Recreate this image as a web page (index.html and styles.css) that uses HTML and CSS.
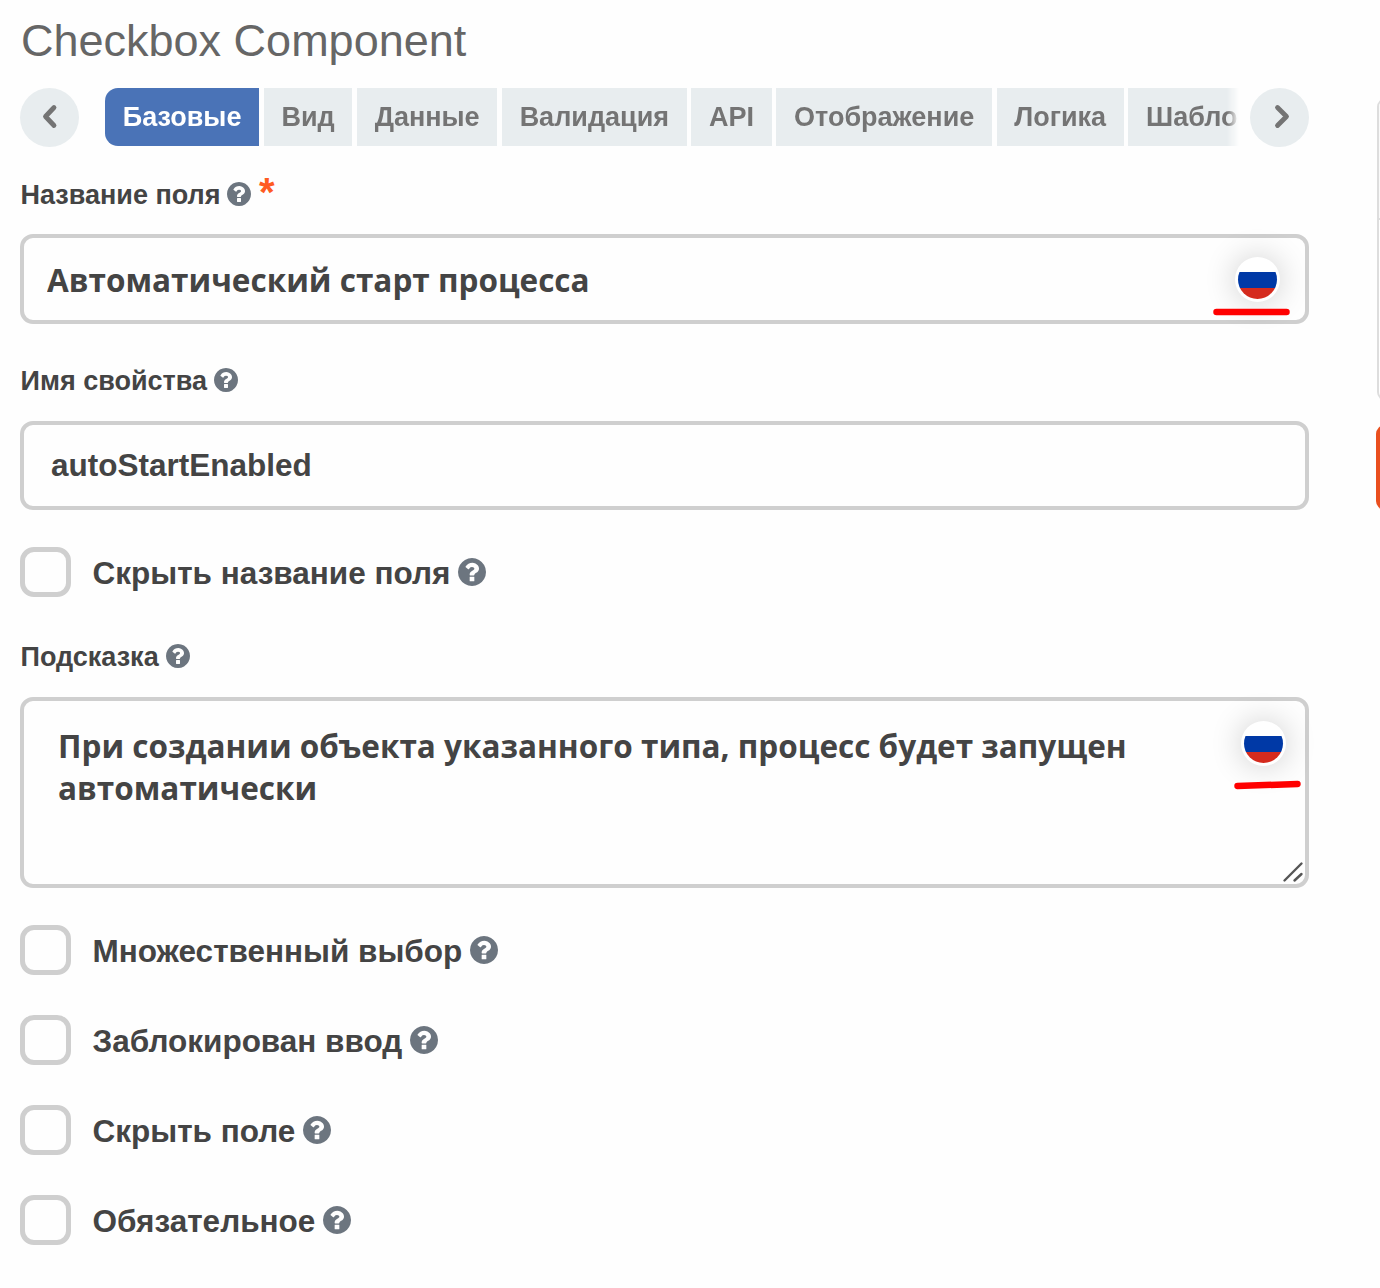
FILE: index.html
```html
<!DOCTYPE html>
<html lang="ru">
<head>
<meta charset="utf-8">
<title>Checkbox Component</title>
<link rel="stylesheet" href="styles.css">
</head>
<body>
<svg class="sprite" aria-hidden="true">
  <symbol id="help" viewBox="128 128 1536 1536"><path d="M1024 1376v-192q0-14-9-23t-23-9h-192q-14 0-23 9t-9 23v192q0 14 9 23t23 9h192q14 0 23-9t9-23zm256-672q0-88-55.5-163t-138.5-116-170-41q-243 0-371 213-15 24 8 42l132 100q7 6 19 6 16 0 25-12 53-68 86-92 34-24 86-24 48 0 85.5 26t37.5 59q0 38-20 61t-68 45q-63 28-115.5 86.5t-52.5 125.5v36q0 14 9 23t23 9h192q14 0 23-9t9-23q0-19 21.5-49.5t54.5-49.5q32-18 49-28.5t46-35 44.5-48 28-60.5 12.5-81zm384 192q0 209-103 385.5t-279.5 279.5-385.5 103-385.5-103-279.5-279.5-103-385.5 103-385.5 279.5-279.5 385.5-103 385.5 103 279.5 279.5 103 385.5z"/></symbol>
</svg>
<div class="page">
  <main class="editor">
    <h1 class="title">Checkbox Component</h1>
    <nav class="tabbar">
      <button class="arrow"><svg width="59" height="59"><path d="M34 19.500 25.500 28.500l8.500 9"/></svg></button>
      <div class="tabs">
        <span class="tab active">Базовые</span>
        <span class="tab">Вид</span>
        <span class="tab">Данные</span>
        <span class="tab">Валидация</span>
        <span class="tab">API</span>
        <span class="tab">Отображение</span>
        <span class="tab">Логика</span>
        <span class="tab">Шаблоны</span>
      </div>
      <button class="arrow"><svg width="59" height="59"><path d="M27.500 19.500 36.500 28.500l-9 9"/></svg></button>
    </nav>

    <div class="label first"><span>Название поля</span><svg class="help"><use href="#help"/></svg><span class="required">*</span></div>
    <div class="field">
      <input class="input localized" value="Автоматический старт процесса">
      <span class="flag"><i></i></span>
      <svg class="stroke" width="77" height="8"><path d="M3.500 4H73.500"/></svg>
    </div>

    <div class="label second"><span>Имя свойства</span><svg class="help"><use href="#help"/></svg></div>
    <div class="field short"><input class="input" value="autoStartEnabled"></div>

    <label class="check lone"><span class="box"></span><span>Скрыть название поля</span><svg class="help"><use href="#help"/></svg></label>

    <div class="label third"><span>Подсказка</span><svg class="help"><use href="#help"/></svg></div>
    <div class="field area">
      <textarea class="input localized">При создании объекта указанного типа, процесс будет запущен автоматически</textarea>
      <span class="flag"><i></i></span>
      <svg class="stroke" width="67" height="10"><path d="M3.500 6 63.500 4"/></svg>
      <svg class="grip" width="22" height="22"><path d="M2.500 19.500 19.500 2.500M12.500 19.500 19.500 13"/></svg>
    </div>

    <div class="checks">
      <label class="check"><span class="box"></span><span>Множественный выбор</span><svg class="help"><use href="#help"/></svg></label>
      <label class="check"><span class="box"></span><span>Заблокирован ввод</span><svg class="help"><use href="#help"/></svg></label>
      <label class="check"><span class="box"></span><span>Скрыть поле</span><svg class="help"><use href="#help"/></svg></label>
      <label class="check"><span class="box"></span><span>Обязательное</span><svg class="help"><use href="#help"/></svg></label>
    </div>
  </main>
  <aside class="preview">
    <div class="card"><div class="card-head"></div></div>
    <div class="action"></div>
  </aside>
</div>
</body>
</html>
```
FILE: styles.css
```css
* { box-sizing: border-box; }
body {
  margin: 0;
  background: #fefefe;
  color: #444;
  font-family: "Liberation Sans", Arial, sans-serif;
  overflow: hidden;
}
.sprite { display: none; }
.page { display: flex; height: 1288px; padding-left: 20px; overflow: hidden; }
.editor { width: 1289px; flex: none; }

.title {
  margin: 0;
  height: 88px;
  padding: 16px 0 0 1px;
  font-size: 45px;
  line-height: 50px;
  font-weight: 400;
  color: #666;
}

.tabbar { display: flex; height: 59px; }
.arrow { flex: none; width: 59px; height: 59px; padding: 0; border: 0; border-radius: 50%; background: #e8edef; }
.arrow svg { display: block; fill: none; stroke: #747474; stroke-width: 4.800; stroke-linecap: round; stroke-linejoin: round; }
.tabs {
  display: flex;
  gap: 4.500px;
  width: 1134px;
  height: 58px;
  margin: 0 11px 0 26px;
  overflow: hidden;
  -webkit-mask-image: linear-gradient(to left, transparent, #000 12px);
  mask-image: linear-gradient(to left, transparent, #000 12px);
}
.tab {
  flex: none;
  padding: 1px 17.750px 0;
  background: #e8edef;
  color: #747474;
  font-size: 27px;
  line-height: 57px;
  font-weight: 700;
}
.tab.active { background: #4a73b7; color: #fff; border-radius: 13px 0 0 13px; }

.label { display: flex; align-items: center; height: 32px; padding-left: .5px; font-size: 27px; line-height: 32px; font-weight: 700; }
.label span:first-child { padding-top: 2px; }
.label.first { margin: 31px 0 24px; }
.label.second { margin: 40px 0 25px; }
.label.third { margin: 43px 0 25px; }
.help { flex: none; width: 24px; height: 24px; margin-left: 7px; fill: #6c757f; }
.required { align-self: flex-start; height: 32px; margin: -6px 0 0 7.500px; font-size: 40px; line-height: 40px; color: #ff5a22; }

.field { position: relative; height: 90px; }
.field.short { height: 89px; }
.field.area { height: 191px; }
.input {
  display: block;
  width: 100%;
  height: 100%;
  margin: 0;
  padding: 0 27px;
  border: 4px solid #cfcfcf;
  border-radius: 13px;
  outline: 0;
  background: #fefefe;
  color: #444;
  font: 700 31.500px "Liberation Sans", Arial, sans-serif;
  resize: none;
  overflow: hidden;
}
.input.localized { padding: 0 23px; font-family: "Open Sans", "Noto Sans", sans-serif; }
textarea.input.localized { padding: 24px 120px 0 34px; line-height: 42px; }

.flag { position: absolute; top: 23px; right: 29px; width: 45px; height: 45px; padding: 3px; border-radius: 50%; background: #fff; box-shadow: 0 0 32px rgba(0, 0, 0, .2); }
.flag i { display: block; width: 39px; height: 39px; border-radius: 50%; background: linear-gradient(#fff 11.500px, #0039a6 12px 27.500px, #d52b1e 28px); }
.area .flag { top: 24px; right: 23px; }
.stroke { position: absolute; top: 74px; right: 19.500px; fill: none; stroke: red; stroke-width: 6.500; stroke-linecap: round; }
.area .stroke { top: 82.500px; right: 8px; }
.grip { position: absolute; right: 5px; bottom: 5px; fill: none; stroke: #555; stroke-width: 2.400; stroke-linecap: round; }

.check { display: flex; align-items: center; height: 50px; font-size: 31.500px; line-height: 36px; font-weight: 700; }
.check span:nth-child(2) { padding-top: 2px; }
.check.lone { margin-top: 37px; }
.box { width: 51px; height: 50px; margin-right: 21.500px; border: 5px solid #cfcfcf; border-radius: 14px; }
.check .help { width: 28px; height: 28px; margin: 0 0 0 8px; }
.checks { display: grid; gap: 40px; margin-top: 37px; }

.preview { flex: none; width: 71px; padding: 98px 0 0 67px; }
.card { width: 90px; height: 303px; margin: 0 0 24px 1px; border: 2px solid #ddd; border-radius: 9px; }
.card-head { height: 120px; border-bottom: 2px solid #ddd; background: #f9f9f9; border-radius: 7px 0 0; }
.action { width: 90px; height: 85px; border-radius: 9px; background: #ea4f1e; }
```
